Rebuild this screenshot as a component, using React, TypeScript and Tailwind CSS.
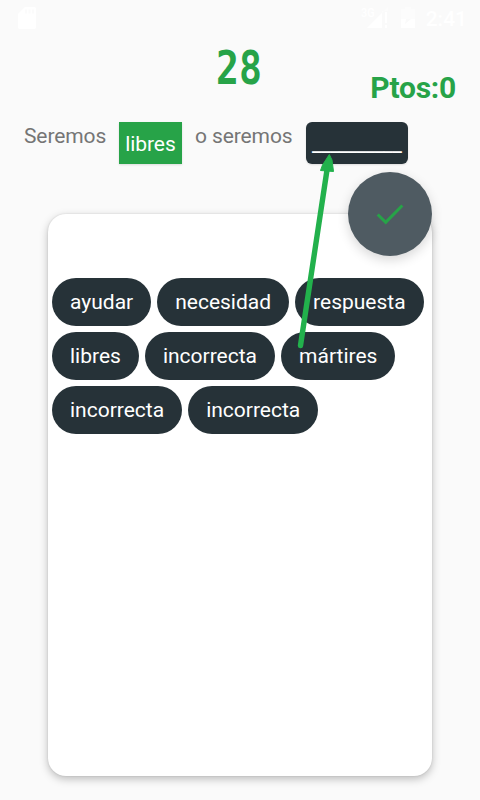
const rows = [
  ['ayudar', 'necesidad', 'respuesta'],
  ['libres', 'incorrecta', 'mártires'],
  ['incorrecta', 'incorrecta'],
];

function StatusBar() {
  return (
    <header className="flex h-9 items-center justify-between pl-[18px] pr-[13px] text-white">
      <svg width="18" height="22" viewBox="0 0 18 22" fill="currentColor">
        <path d="M7 0H16a2 2 0 0 1 2 2V20a2 2 0 0 1-2 2H2a2 2 0 0 1-2-2V7Z" />
        <path fill="#fafafa" opacity=".7" d="M7 2.500v4h2v-4ZM10.500 2.500v4h2v-4ZM14 2.500v4h2v-4Z" />
      </svg>
      <div className="flex h-full items-center">
        <div className="relative mr-[13px] h-[22px] w-[26px]">
          <span className="absolute -left-px -top-px origin-left scale-x-90 text-[12px] font-medium leading-[14px]">3G</span>
          <svg className="absolute inset-0" width="26" height="22" viewBox="0 0 26 22" fill="currentColor">
            <path d="M5 21 20 6V21Z" />
            <path opacity=".4" d="M20 6 26 0V4H20Z" />
            <path d="M23 5h2v11h-2ZM23 18h2v3h-2Z" />
          </svg>
        </div>
        <svg className="mr-[11px]" width="14" height="22" viewBox="0 0 14 22" fill="currentColor">
          <path opacity=".4" d="M4 0h6v2h4v10H0V2h4Z" />
          <path d="M0 12h5l-1 5 6-5h4v9H0Z" />
        </svg>
        <span className="pt-0.5 text-[21px] font-medium leading-none">2:41</span>
      </div>
    </header>
  );
}

export default function App() {
  return (
    <main className="relative h-[800px] w-[480px] overflow-hidden bg-[#fafafa] font-['Roboto',sans-serif]">
      <StatusBar />
      <section className="grid h-[86px] grid-cols-[1fr_auto_1fr] pr-6">
        <div className="col-start-2 ml-[22px] flex w-[46px] justify-center pt-[8px]">
          <span className="origin-center scale-x-[.82] font-['DejaVu_Sans_Mono',monospace] text-[46.500px] font-bold leading-[48px] text-[#27a348]">28</span>
        </div>
        <div className="pt-[34px] text-right text-[30px] font-bold leading-[35px] tracking-[-0.25px] text-[#27a348]">Ptos:0</div>
      </section>
      <section className="flex h-[92px] items-start pl-6 text-[21px] leading-[28px] tracking-[-0.1px] text-[#757575]">
        <span className="w-[95px]">Seremos</span>
        <span className="mr-[13px] flex h-[42px] w-[63px] items-center justify-center bg-[#27a348] pt-[2px] text-white shadow-[0_1px_2px_rgba(0,0,0,0.12)]">libres</span>
        <span className="w-[111px] whitespace-nowrap">o seremos</span>
        <span className="flex h-[42px] w-[102px] items-center rounded-[6px] bg-[#263238] pl-[6px] text-white shadow-[0_1px_2px_rgba(0,0,0,0.12)]">
          <span className="pt-px font-medium tracking-[-0.45px]">__________</span>
        </span>
      </section>
      <section className="mx-12 h-[562px] rounded-[18px] bg-white px-1 pt-16 shadow-[0_3px_8px_rgba(0,0,0,0.25),0_0_2px_rgba(0,0,0,0.12)]">
        <div className="flex flex-col gap-[6px]">
          {rows.map((row, i) => (
            <div key={i} className="flex gap-[6px]">
              {row.map((word, j) => (
                <button key={j} className="h-12 shrink-0 rounded-full bg-[#263238] px-[18px] text-[21px] leading-[48px] text-white">{word}</button>
              ))}
            </div>
          ))}
        </div>
      </section>
      <button aria-label="Comprobar" className="absolute left-[348px] top-[172px] flex h-[84px] w-[84px] items-center justify-center rounded-full bg-[#4f5b62] shadow-[0_4px_12px_rgba(0,0,0,0.16)]">
        <svg width="28" height="22" viewBox="0 0 28 22" fill="none" stroke="#27a348" strokeWidth="3">
          <path d="M1.700 11.500 9.700 19.300 26.300 2.500" />
        </svg>
      </button>
      <svg className="pointer-events-none absolute left-[290px] top-[150px]" width="60" height="204" viewBox="290 150 60 204">
        <path d="M300.500 345.500 327 170" stroke="#22b14c" strokeWidth="5.400" strokeLinecap="round" />
        <path d="M329.300 154.500 332 160 333.500 171.500 320.500 170.500 322.500 165Z" fill="#22b14c" stroke="#22b14c" strokeLinejoin="round" />
      </svg>
    </main>
  );
}
